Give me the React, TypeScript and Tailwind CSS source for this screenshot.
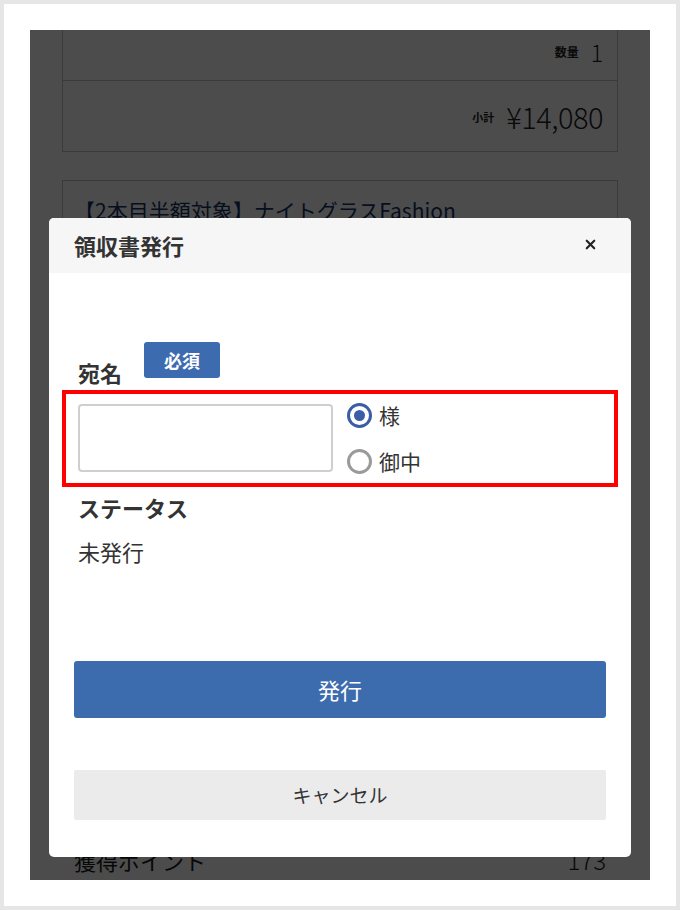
import { X } from 'lucide-react';

const font = "font-['Noto_Sans_CJK_JP','Noto_Sans',sans-serif]";

function Radio({ label, checked }: { label: string; checked?: boolean }) {
  return (
    <label className="flex h-[30px] items-center gap-[7px]">
      {checked ? (
        <span className="flex h-[25px] w-[25px] items-center justify-center rounded-full border-[3px] border-[#3a5da6]">
          <span className="h-[11px] w-[11px] rounded-full bg-[#3a5da6]" />
        </span>
      ) : (
        <span className="h-[25px] w-[25px] rounded-full border-[3px] border-[#9a9a9a]" />
      )}
      <span className="text-[21px] leading-none text-[#333]">{label}</span>
    </label>
  );
}

export default function App() {
  return (
    <div className={`min-h-screen bg-[#e6e6e6] p-1 ${font}`}>
      <div className="h-[902px] w-[672px] bg-white pl-[26px] pt-[26px]">
        {/* Phone screen */}
        <div className="relative h-[850px] w-[620px] overflow-hidden bg-white">

          {/* Page underneath */}
          <div className="px-[32px]">
            <div className="border-x border-b border-[#c4c4c4]">
              <div className="flex h-[51px] items-center justify-end gap-[12px] border-b border-[#c4c4c4] pb-[6px] pr-[14px]">
                <span className="text-[12px] font-bold text-[#222]">数量</span>
                <span className="text-[23px] font-light text-[#222]">1</span>
              </div>
              <div className="flex h-[70px] items-center justify-end gap-[12px] pr-[14px] pt-[2px]">
                <span className="text-[11px] font-bold text-[#222]">小計</span>
                <span className="text-[29px] font-light tracking-[-0.5px] text-[#222]">¥14,080</span>
              </div>
            </div>

            <div className="mt-[28px] h-[560px] border border-[#c4c4c4] px-[11px] pt-[14px]">
              <p className="text-[21px] text-[#16356a]">【2本目半額対象】ナイトグラスFashion</p>
            </div>

            <div className="mt-[102px] flex items-center justify-between px-[12px]">
              <span className="text-[22px] text-[#1a1a1a]">獲得ポイント</span>
              <span className="text-[24px] font-light text-[#1a1a1a]">173</span>
            </div>
          </div>

          {/* Backdrop */}
          <div className="absolute inset-0 bg-black/70" />

          {/* Modal */}
          <div className="absolute left-[19px] top-[188px] flex h-[639px] w-[582px] flex-col rounded-[5px] bg-white">
            <div className="flex h-[55px] items-center justify-between rounded-t-[5px] bg-[#f6f6f6] pl-[25px] pr-[33px]">
              <h2 className="text-[22px] font-bold text-[#333]">領収書発行</h2>
              <X size={15} strokeWidth={3.4} className="-mt-[3px] text-[#222]" />
            </div>

            <div className="flex flex-col px-[25px]">
              <div className="mt-[69px] flex items-start">
                <span className="ml-[4px] mt-[19px] text-[22px] font-bold leading-none text-[#333]">宛名</span>
                <span className="ml-[22px] flex h-[36px] w-[76px] items-center justify-center rounded-[3px] bg-[#3c6bb0] text-[18px] font-bold text-white">
                  必須
                </span>
              </div>

              <div className="-mx-[12px] mt-[7px] flex h-[97px] items-start border-4 border-[#ff0000] pl-[12px]">
                <input
                  type="text"
                  className="mt-[10px] h-[68px] w-[255px] rounded-[4px] border-2 border-[#cfcfcf] bg-white outline-none"
                />
                <div className="ml-[14px] mt-[6px] flex flex-col gap-[16px]">
                  <Radio label="様" checked />
                  <Radio label="御中" />
                </div>
              </div>

              <h3 className="ml-[4px] mt-[9px] text-[22px] font-bold leading-none text-[#333]">ステータス</h3>
              <p className="ml-[4px] mt-[22px] text-[22px] leading-none text-[#333]">未発行</p>

              <button className="mt-[99px] h-[57px] w-full rounded-[3px] bg-[#3d6cae] text-[22px] text-white">
                発行
              </button>
              <button className="mt-[52px] h-[50px] w-full rounded-[2px] bg-[#ebebeb] text-[19px] text-[#333]">
                キャンセル
              </button>
            </div>
          </div>
        </div>
      </div>
    </div>
  );
}
